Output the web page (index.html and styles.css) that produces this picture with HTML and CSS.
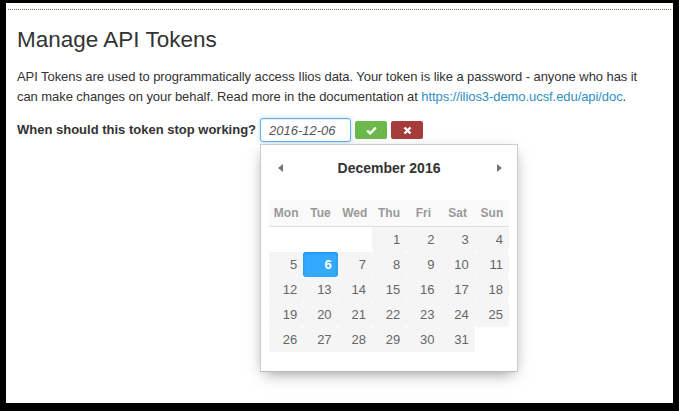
FILE: index.html
```html
<!DOCTYPE html>
<html>
<head>
<meta charset="utf-8">
<link rel="stylesheet" href="styles.css">
</head>
<body>
<div class="screen">
  <div class="topline"></div>
  <h1 class="title">Manage API Tokens</h1>
  <p class="intro">API Tokens are used to programmatically access Ilios data. Your token is like a password - anyone who has it can make changes on your behalf. Read more in the documentation at <a href="#">https://ilios3-demo.ucsf.edu/api/doc</a>.</p>
  <div class="expire-row">
    <label class="expire-label">When should this token stop working?</label>
    <div class="picker-wrap">
      <input class="date-input" type="text" value="2016-12-06">
      <div class="datepicker">
        <div class="dp-title">
          <span class="dp-prev"><svg width="6" height="8" viewBox="0 0 6 8"><path d="M5 0 L0 4 L5 8 Z" fill="#555"/></svg></span>
          <span class="dp-label">December</span><span class="dp-label">2016</span>
          <span class="dp-next"><svg width="6" height="8" viewBox="0 0 6 8"><path d="M0 0 L5 4 L0 8 Z" fill="#555"/></svg></span>
        </div>
        <table class="dp-table">
          <thead>
            <tr><th>Mon</th><th>Tue</th><th>Wed</th><th>Thu</th><th>Fri</th><th>Sat</th><th>Sun</th></tr>
          </thead>
          <tbody>
            <tr><td class="empty"></td><td class="empty"></td><td class="empty"></td><td><span class="day">1</span></td><td><span class="day">2</span></td><td><span class="day">3</span></td><td><span class="day">4</span></td></tr>
            <tr><td><span class="day">5</span></td><td><span class="day selected">6</span></td><td><span class="day">7</span></td><td><span class="day">8</span></td><td><span class="day">9</span></td><td><span class="day">10</span></td><td><span class="day">11</span></td></tr>
            <tr><td><span class="day">12</span></td><td><span class="day">13</span></td><td><span class="day">14</span></td><td><span class="day">15</span></td><td><span class="day">16</span></td><td><span class="day">17</span></td><td><span class="day">18</span></td></tr>
            <tr><td><span class="day">19</span></td><td><span class="day">20</span></td><td><span class="day">21</span></td><td><span class="day">22</span></td><td><span class="day">23</span></td><td><span class="day">24</span></td><td><span class="day">25</span></td></tr>
            <tr><td><span class="day">26</span></td><td><span class="day">27</span></td><td><span class="day">28</span></td><td><span class="day">29</span></td><td><span class="day">30</span></td><td><span class="day">31</span></td><td class="empty"></td></tr>
          </tbody>
        </table>
      </div>
    </div>
    <button class="btn btn-ok"><svg width="11" height="9" viewBox="0 0 11 9"><path d="M1.2 4.6 L4.2 7.4 L9.8 1.6" fill="none" stroke="#fff" stroke-width="2.4"/></svg></button>
    <button class="btn btn-cancel"><svg width="9" height="9" viewBox="0 0 9 9"><path d="M1.5 1.5 L7.5 7.5 M7.5 1.5 L1.5 7.5" fill="none" stroke="#fff" stroke-width="2.4"/></svg></button>
  </div>
</div>
</body>
</html>
```

FILE: styles.css
```css
html, body {
  margin: 0;
  padding: 0;
  background: #000;
}
.screen {
  margin: 3px 6px 8px 6px;
  height: 400px;
  background: #fff;
  padding: 0 11px;
  box-sizing: border-box;
  font-family: "Liberation Sans", Arial, sans-serif;
  color: #333;
  font-size: 13px;
  line-height: 20px;
  overflow: hidden;
}
.topline {
  margin: 0 -9px;
  height: 6px;
  border-bottom: 1px dotted #8a7552;
}
.title {
  margin: 17px 0 0 0;
  font-size: 22.5px;
  line-height: 26px;
  font-weight: normal;
  color: #333;
}
.intro {
  margin: 14px 0 0 0;
  max-width: 632px;
  letter-spacing: -0.07px;
}
.intro a {
  color: #2f8fbf;
  text-decoration: none;
}
.expire-row {
  margin-top: 11px;
  display: flex;
  align-items: center;
}
.expire-label {
  font-weight: bold;
  margin-right: 4px;
}
.picker-wrap {
  position: relative;
}
.date-input {
  display: block;
  box-sizing: border-box;
  width: 91px;
  height: 24px;
  margin: 0;
  padding: 0 8px;
  border: 1px solid #66afe9;
  border-radius: 3px;
  box-shadow: inset 0 1px 1px rgba(0,0,0,.075), 0 0 4px rgba(102,175,233,.5);
  font-family: "Liberation Sans", Arial, sans-serif;
  font-style: italic;
  font-size: 13px;
  color: #555;
  outline: none;
}
.btn {
  width: 32px;
  height: 18px;
  border: 0;
  border-radius: 2px;
  padding: 0;
  margin-left: 4px;
  display: flex;
  align-items: center;
  justify-content: center;
}
.btn-ok {
  background: #6db84a;
}
.btn-cancel {
  background: #a63d3b;
}
.datepicker {
  position: absolute;
  left: 0;
  top: 26px;
  width: 258px;
  box-sizing: border-box;
  background: #fff;
  border: 1px solid #ccc;
  border-bottom-color: #bbb;
  box-shadow: 0 5px 15px -5px rgba(0,0,0,.5);
  padding: 8px 8px 19px 8px;
  z-index: 10;
}
.dp-title {
  position: relative;
  text-align: center;
  height: 47px;
  padding-top: 5px;
  box-sizing: border-box;
}
.dp-label {
  display: inline-block;
  font-size: 14px;
  font-weight: bold;
  line-height: 20px;
  padding: 0 2px;
  color: #333;
}
.dp-prev, .dp-next {
  position: absolute;
  top: 11px;
  opacity: .8;
  line-height: 0;
}
.dp-prev { left: 9px; }
.dp-next { right: 6px; }
.dp-table {
  width: 100%;
  border-collapse: collapse;
  border-spacing: 0;
  table-layout: fixed;
}
.dp-table th {
  padding: 0;
  height: 26px;
  font-size: 12px;
  font-weight: bold;
  color: #999;
  text-align: center;
  background: #fafafa;
  border-bottom: 1px solid #ddd;
}
.dp-table td {
  padding: 0;
  height: 25px;
}
.day {
  display: block;
  box-sizing: border-box;
  height: 25px;
  padding: 0 6px 0 0;
  line-height: 25px;
  text-align: right;
  font-size: 13px;
  color: #666;
  background: #f5f5f5;
  border-radius: 2px;
}
.day.selected {
  color: #fff;
  font-weight: bold;
  background: #33aaff;
  box-shadow: inset 0 1px 3px #178fe5;
  border-radius: 3px;
}
```
